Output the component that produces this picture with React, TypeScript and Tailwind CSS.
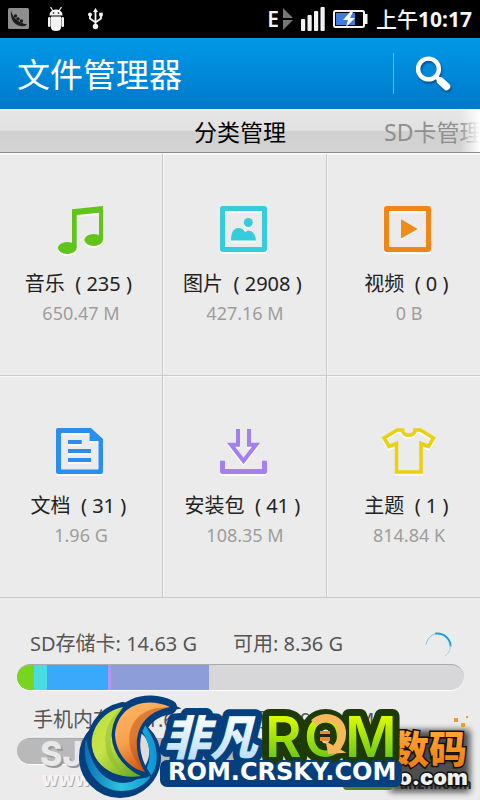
import type { ReactNode } from "react";

const CATEGORIES = [
  { key: "music", name: "音乐", count: 235, size: "650.47 M" },
  { key: "picture", name: "图片", count: 2908, size: "427.16 M" },
  { key: "video", name: "视频", count: 0, size: "0 B" },
  { key: "doc", name: "文档", count: 31, size: "1.96 G" },
  { key: "apk", name: "安装包", count: 41, size: "108.35 M" },
  { key: "theme", name: "主题", count: 1, size: "814.84 K" },
];

const SD_SEGMENTS = [
  { color: "bg-[#79d321]", percent: 3.8 },
  { color: "bg-[#4adbe3]", percent: 2.9 },
  { color: "bg-[#3aa9f9]", percent: 13.7 },
  { color: "bg-[#b394f2]", percent: 0.7 },
  { color: "bg-[#8d9dda]", percent: 21.9 },
];

const ICONS: Record<string, ReactNode> = {
  music: (
    <g fill="#62c41a">
      <path d="M19 3.3L50 0V34H46V6.7L23.7 9V42H19z" />
      <ellipse cx="14.3" cy="42" rx="9.4" ry="6" />
      <ellipse cx="40.7" cy="34" rx="9.3" ry="6" />
    </g>
  ),
  picture: (
    <g fill="#36cdda">
      <rect x="5.5" y="2.5" width="42" height="41" rx="0.5" fill="none" stroke="#36cdda" strokeWidth="5" />
      <circle cx="31.3" cy="16.5" r="4.5" />
      <path d="M14 34.5C14 26 17 22 21.5 22C25 22 27 24 28 26.5C31 23 38 24 39 34.5z" />
    </g>
  ),
  video: (
    <g fill="#f08b17">
      <rect x="5.5" y="2.5" width="42" height="41" rx="0.5" fill="none" stroke="#ee8718" strokeWidth="5" />
      <path d="M20 13.3L36.7 23L20 32.6z" />
    </g>
  ),
  doc: (
    <g fill="#2b8eee">
      <path
        fillRule="evenodd"
        d="M5 0H38L50 11V44a2 2 0 0 1-2 2H5a2 2 0 0 1-2-2V2a2 2 0 0 1 2-2zM9 5a1 1 0 0 0-1 1V40.5a1 1 0 0 0 1 1H44.500a1 1 0 0 0 1-1V13H36.500V5z"
      />
      <path d="M15 12H28.700V16H15zM15 21H38V25H15zM15 30H38V34H15z" />
    </g>
  ),
  apk: (
    <g fill="none" stroke="#a47ff0">
      <path d="M5.500 32.700V43.500H47.500V32.700" strokeWidth="5" strokeLinejoin="round" />
      <path d="M21 1V16.700H14L26.500 33L39 16.700H32V1" strokeWidth="4" />
    </g>
  ),
  theme: (
    <path
      d="M21.500 2H16L3 10L8 18.500L15.500 15.500V44H40V15.500L47.500 18.500L52.500 10L39.500 2H34C34 9 21.500 9 21.500 2z"
      fill="none"
      stroke="#ecd00f"
      strokeWidth="3.6"
    />
  ),
};

const StatusBar = () => (
  <div className="flex h-[38px] items-center bg-black pl-2 pr-2 text-[#f4f4f4]">
    <svg className="h-[22px] w-[22px]" viewBox="0 0 22 22">
      <rect width="21" height="21" rx="1.500" fill="#8e8e8e" />
      <path d="M3 2C4 8 8 14 19 16.500C17 19.500 9 18.500 5.500 14C3 10.500 2.500 6 3 2z" fill="#1c1c1c" />
      <circle cx="7.500" cy="8" r="1.700" fill="#1c1c1c" />
      <circle cx="10" cy="11" r="1.800" fill="#1c1c1c" />
      <circle cx="13.500" cy="13" r="1.700" fill="#1c1c1c" />
    </svg>
    <svg className="ml-[18px] h-6 w-4" viewBox="0 0 16 24" fill="#f4f4f4">
      <path d="M1.500 8.500C1.500 5 4 2.500 8 2.500s6.500 2.500 6.500 6z" />
      <path d="M2.500 0L5 4M13.500 0L11 4" stroke="#f4f4f4" strokeWidth="1.200" />
      <circle cx="5.500" cy="6" r="0.800" fill="#000" />
      <circle cx="10.500" cy="6" r="0.800" fill="#000" />
      <path d="M3 9.500H13V20.500C13 23 11 24 8 24S3 23 3 20.500z" />
      <rect x="0" y="10" width="2.600" height="10" rx="1.200" />
      <rect x="13.400" y="10" width="2.600" height="10" rx="1.200" />
    </svg>
    <svg className="ml-6 h-[22px] w-4" viewBox="0 0 16 22" fill="#f4f4f4">
      <path d="M7.500 3V18M2 7V10.500L7.500 14.500L13 10.500V7" fill="none" stroke="#f4f4f4" strokeWidth="1.800" />
      <path d="M7.500 0L10 4H5z" />
      <circle cx="7.500" cy="18.500" r="2.700" />
      <circle cx="2" cy="6.500" r="2" />
      <rect x="11.200" y="4.700" width="3.600" height="3.600" />
    </svg>
    <div className="ml-auto flex items-center">
      <span className="text-[21px] font-semibold leading-6">E</span>
      <svg className="ml-1 h-[22px] w-[10px]" viewBox="0 0 10 22" fill="#777">
        <path d="M0 0L10 10H0zM0 12H10L0 22z" />
      </svg>
      <svg className="ml-2 h-6 w-6" viewBox="0 0 24 24" fill="#f4f4f4">
        <rect x="0" y="12" width="4.200" height="12" rx="1" />
        <rect x="6.500" y="8" width="4.200" height="16" rx="1" />
        <rect x="13" y="4" width="4.200" height="20" rx="1" />
        <rect x="19.500" y="0" width="4.200" height="24" rx="1" />
      </svg>
      <svg className="ml-2 h-[18px] w-[35px]" viewBox="0 0 35 18">
        <rect x="1" y="1" width="30" height="16" rx="1.500" fill="#000" stroke="#f4f4f4" strokeWidth="2" />
        <rect x="32" y="4" width="2.500" height="10" fill="#f4f4f4" />
        <rect x="3" y="3" width="19" height="12" fill="#3f7be0" />
        <path d="M17 2L10 10H15L13 17L22 8H17L20 2z" fill="#fff" />
      </svg>
      <span className="ml-2 text-[21px] font-medium leading-6">
        上午<b>10:17</b>
      </span>
    </div>
  </div>
);

const StorageBar = ({ label, children }: { label: string; children: ReactNode }) => (
  <div
    role="img"
    aria-label={label}
    className="mt-2 flex h-[26px] overflow-hidden rounded-full border-t border-[#aaaaac] bg-[#d7d7d9] shadow-[0_1px_0_#fff]"
  >
    {children}
  </div>
);

// Site stamps along the bottom edge
const Stamps = () => (
  <svg className="pointer-events-none absolute inset-x-0 bottom-0 w-full" viewBox="0 0 480 110">
    <defs>
      <linearGradient id="ice" x1="0" y1="0" x2="0" y2="1">
        <stop offset="0.200" stopColor="#fff" />
        <stop offset="0.900" stopColor="#b4dcf8" />
      </linearGradient>
      <linearGradient id="lime" x1="0" y1="0" x2="0" y2="1">
        <stop offset="0.200" stopColor="#dcfa00" />
        <stop offset="0.850" stopColor="#62c51c" />
      </linearGradient>
      <linearGradient id="amber" x1="0" y1="0" x2="0" y2="1">
        <stop offset="0.200" stopColor="#ffa834" />
        <stop offset="1" stopColor="#e8760c" />
      </linearGradient>
      <linearGradient id="leaf" x1="0" y1="0" x2="1" y2="1">
        <stop offset="0" stopColor="#b9dc3c" />
        <stop offset="0.400" stopColor="#c9e34a" />
        <stop offset="1" stopColor="#5ea51d" />
      </linearGradient>
      <linearGradient id="flame" x1="0.200" y1="0" x2="0.600" y2="1">
        <stop offset="0" stopColor="#ffb765" />
        <stop offset="0.500" stopColor="#f8a04c" />
        <stop offset="1" stopColor="#c94a0c" />
      </linearGradient>
      <linearGradient id="sea" x1="0" y1="0" x2="1" y2="0">
        <stop offset="0" stopColor="#0a6fb5" />
        <stop offset="0.500" stopColor="#2cc3dc" />
        <stop offset="1" stopColor="#0a96d6" />
      </linearGradient>
      <filter id="soft" x="-20%" y="-30%" width="140%" height="160%">
        <feGaussianBlur stdDeviation="3" />
      </filter>
    </defs>

    {/* grey stamp */}
    <g fontFamily="Inter, sans-serif" fontWeight="800">
      <text x="42" y="78" fontSize="34" fill="#999">SJ</text>
      <text x="40" y="76" fontSize="34" fill="#e8e8e8">SJ</text>
      <text x="43" y="97" fontSize="19" fill="#aaa">www.</text>
      <text x="42" y="96" fontSize="19" fill="#f4f4f4">www.</text>
    </g>

    {/* orange stamp */}
    <rect x="390" y="40" width="80" height="62" fill="#111" opacity="0.700" filter="url(#soft)" />
    <rect x="343" y="82" width="50" height="18" rx="4" fill="#4f8221" />
    <text x="400" y="99" fontSize="14" fontWeight="700" fontFamily="Inter, sans-serif" fill="#222">anzhi.com</text>
    <text
      x="391"
      y="73"
      fontSize="38"
      fontWeight="900"
      fontFamily="'Noto Sans CJK SC', sans-serif"
      fill="url(#amber)"
      stroke="#111"
      strokeWidth="3"
      paintOrder="stroke"
    >
      数码
    </text>
    <path d="M454 28h4v4h-4zM461 33h4v4h-4zM466 26h2v2h-2z" fill="#f39a2c" />
    <text
      x="398"
      y="95"
      fontSize="22"
      fontWeight="900"
      fontFamily="Inter, sans-serif"
      fill="#f0f0f0"
      stroke="#111"
      strokeWidth="3"
      paintOrder="stroke"
    >
      o.com
    </text>

    {/* round emblem */}
    <g fill="#063f7e" stroke="#063f7e" strokeLinejoin="round">
      <circle cx="120" cy="67" r="40" strokeWidth="2" />
      <path d="M123 17C100 22 90 42 92 57C95 78 118 90 141 86z" strokeWidth="10" />
      <path d="M170 17C146 6 117 15 115 45C116 64 130 79 145 82C131 60 132 24 170 17z" strokeWidth="14" />
    </g>
    <path d="M141 43C150 50 152 65 145 76C138 64 137 54 141 43z" fill="#ddd" />
    <path d="M86 48C80 74 95 101 122 101C151 101 171 69 144 34L142 41C158 66 147 93 123 93C102 92 90 74 86 48z" fill="url(#sea)" />
    <path d="M123 17C100 22 90 42 92 57C95 78 118 90 141 86C118 76 103 46 123 17z" fill="url(#leaf)" stroke="#063f7e" strokeWidth="5" paintOrder="stroke" />
    <path d="M123 17C99 34 98 72 128 86C108 70 104 43 123 17z" fill="#8bbd27" opacity="0.500" />
    <path d="M170 17C146 6 117 15 115 45C116 64 130 79 145 82C131 60 132 24 170 17z" fill="url(#flame)" stroke="#063f7e" strokeWidth="7" paintOrder="stroke" />
    <path d="M158 18C128 22 118 56 145 82C131 60 132 24 170 17z" fill="#b9440b" opacity="0.450" />

    {/* banner */}
    <rect x="160" y="70" width="242" height="27" rx="7" fill="#063f7e" />
    <text
      x="163"
      y="65"
      fontSize="47"
      fontWeight="900"
      fontStyle="italic"
      fontFamily="'Noto Sans CJK SC', sans-serif"
      fill="url(#ice)"
      stroke="#063f7e"
      strokeWidth="14"
      strokeLinejoin="round"
      paintOrder="stroke"
    >
      非凡
    </text>
    <text
      x="265 304 345"
      y="67"
      fontSize="56"
      fontWeight="600"
      fontFamily="Inter, sans-serif"
      fill="url(#lime)"
      stroke="#1d3a08"
      strokeWidth="14"
      strokeLinejoin="round"
      paintOrder="stroke"
    >
      ROM
    </text>
    <path d="M314 33C322 24 343 27 342 44C342 51 339 55 336 58" fill="none" stroke="#f6b95a" strokeWidth="8" />
    <path d="M327 53L343 62L329 63z" fill="#f6b95a" stroke="#f6b95a" strokeWidth="2" />
    <path d="M320 41h10v10h-10z" fill="#f08a1d" />
    <path d="M320 44h10v3h-10z" fill="#222" />
    <text
      x="168"
      y="90"
      fontSize="24"
      fontWeight="700"
      fontFamily="'DejaVu Sans', sans-serif"
      fill="#fff"
      stroke="#063f7e"
      strokeWidth="4"
      paintOrder="stroke"
    >
      ROM.CRSKY.COM
    </text>
  </svg>
);

export default function App() {
  return (
    <div className="relative flex min-h-screen flex-col overflow-hidden bg-[#ebebeb] font-['Noto_Sans','Noto_Sans_CJK_SC',sans-serif]">
      <StatusBar />

      <header className="flex h-[71px] items-center bg-linear-to-b from-[#0099e6] to-[#0078cb] pl-[17px]">
        <h1 className="pt-[3px] text-[33px] leading-[44px] text-white">文件管理器</h1>
        <div className="ml-auto h-[41px] w-px bg-[#62b8ea]" />
        <button type="button" aria-label="搜索" className="flex h-full w-[86px] items-center pl-5">
          <svg className="h-10 w-10 drop-shadow-[1px_2px_1px_#00508f]" viewBox="0 0 40 40" fill="none" stroke="#fff">
            <circle cx="14.500" cy="15" r="10.400" strokeWidth="4.400" />
            <path d="M22 22.500L25 25.500" strokeWidth="4" />
            <path d="M26.500 27L32.500 32.500" strokeWidth="7.500" strokeLinecap="round" />
          </svg>
        </button>
      </header>

      <nav className="relative flex h-11 items-center justify-center border-b border-[#8a8a8a] bg-[linear-gradient(#f8f8f8_0,#e6e6e6_2px,#e1e1e1_22px,#d0d0d0_22px,#d3d3d3_100%)] pt-[3px] text-[23px] leading-7">
        <button type="button" className="text-black">分类管理</button>
        <button type="button" className="absolute left-[80%] whitespace-nowrap text-[#8f8f8f]">SD卡管理</button>
        <div className="absolute inset-y-0 right-0 w-5 bg-linear-to-r from-white/0 to-white" />
      </nav>

      <main className="-mr-[11px] -ml-px grid grid-cols-3 border-t border-[#fafafa]">
        {CATEGORIES.map((item) => (
          <button
            key={item.key}
            type="button"
            className="flex h-[222px] flex-col items-center border-r border-b border-[#c9c9c9] pt-[52px] pl-px shadow-[inset_1px_1px_0_#f6f6f6]"
          >
            <svg className="h-12 w-14 overflow-visible drop-shadow-[0_2px_0_#fbfbfb]" viewBox="0 0 56 48">
              {ICONS[item.key]}
            </svg>
            <span className="mt-[18px] whitespace-pre text-[20px] leading-6 text-[#222]">
              {`${item.name}  ( ${item.count} ) `}
            </span>
            <span className="mt-[5px] text-lg leading-6 text-[#9d9d9d]">{item.size}</span>
          </button>
        ))}
      </main>

      <section className="flex-1 pt-[34px] pr-4 pl-[17px] text-[20px] leading-6 text-[#555]">
        <div className="flex pr-3 pl-[13px]">
          <span>SD存储卡: 14.63 G</span>
          <span className="ml-9">可用: 8.36 G</span>
          <svg className="-mb-1 ml-auto h-7 w-7" viewBox="0 0 28 28" fill="none" strokeWidth="2" strokeLinecap="round">
            <path d="M2 12C4 5 9 1.500 14 1.500" stroke="#74c3ec" strokeWidth="1" />
            <path d="M12 1.500C20 1 26.500 7 26.500 14" stroke="#1d9fe0" />
            <path d="M26.500 14C26.500 19 24 22 21 24" stroke="#9bd4f0" strokeWidth="1" />
          </svg>
        </div>
        <StorageBar label="SD存储卡">
          {SD_SEGMENTS.map((seg) => (
            <div key={seg.color} className={seg.color} style={{ width: `${seg.percent}%` }} />
          ))}
        </StorageBar>
        <div className="mt-4 flex pt-[2px] -mb-[2px] pl-4">
          <span>手机内存: 201.62 M</span>
          <span className="ml-10">可用: 98.51 M</span>
        </div>
        <StorageBar label="手机内存">
          <div className="w-1/2 bg-[#b9b9b9]" />
        </StorageBar>
      </section>

      <Stamps />
    </div>
  );
}
